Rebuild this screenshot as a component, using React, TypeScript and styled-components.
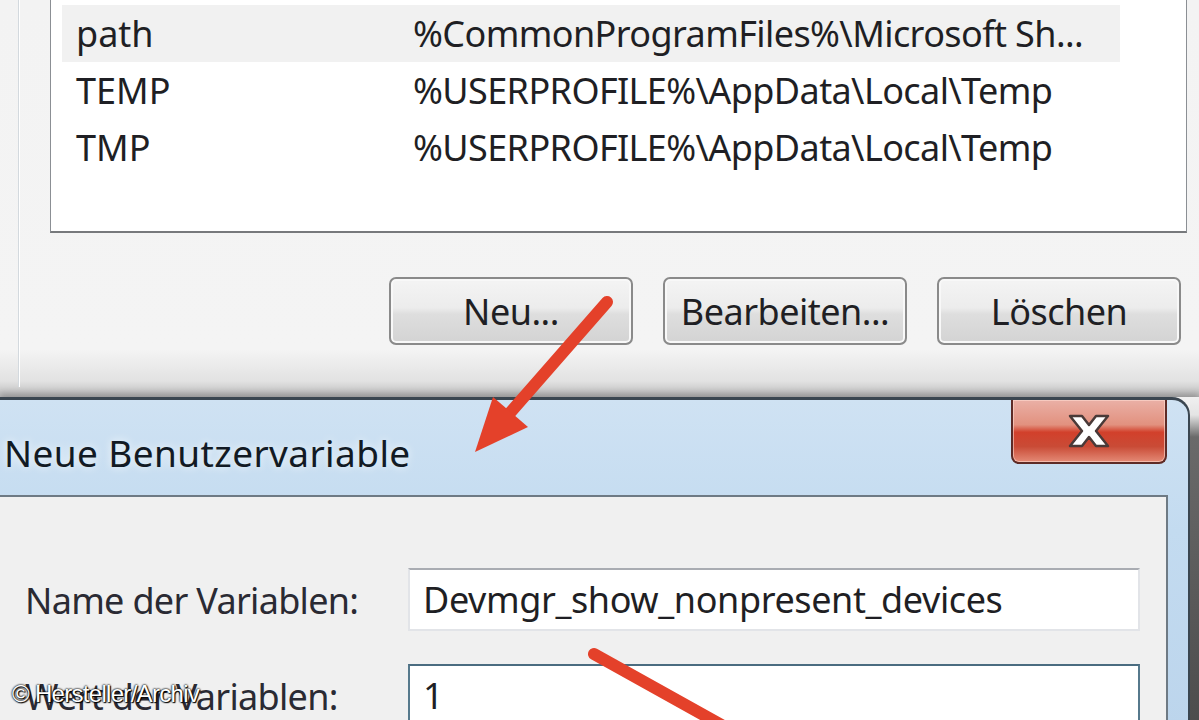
import styled, { createGlobalStyle } from 'styled-components';

const GlobalStyle = createGlobalStyle`
  html, body {
    margin: 0;
    padding: 0;
    overflow: hidden;
    background: #f0f0f0;
  }
`;

const uiFont = `'Noto Sans', 'Open Sans', 'DejaVu Sans', sans-serif`;

const Screen = styled.div`
  position: relative;
  width: 1199px;
  height: 720px;
  overflow: hidden;
  display: flex;
  flex-direction: column;
  font-family: ${uiFont};
  font-size: 36px;
  color: #1f1f24;
`;

const BackDialog = styled.div`
  flex: 0 0 397px;
  display: flex;
  padding-right: 12px;
  box-sizing: border-box;
  background: linear-gradient(to bottom, #f3f3f3 0%, #f4f4f4 88%, #e2e2e2 96%, #b9b9b9 100%);
`;

const GroupEdge = styled.div`
  flex: 0 0 18px;
  border-right: 1px solid #d3d9de;
  box-shadow: 1px 0 0 #ffffff;
  margin-bottom: 10px;
`;

const GroupBody = styled.div`
  flex: 1;
  padding-left: 31px;
  display: flex;
  flex-direction: column;
`;

const ListBox = styled.div`
  height: 233px;
  box-sizing: border-box;
  background: #ffffff;
  border: 1px solid #8b8f94;
  border-top: none;
  border-bottom: 2px solid #77797c;
  padding: 5px 66px 0 11px;
  display: flex;
  flex-direction: column;
`;

const Row = styled.div<{ $selected?: boolean }>`
  height: 57px;
  display: flex;
  align-items: center;
  padding-left: 14px;
  background: ${({ $selected }) => ($selected ? '#f1f1f1' : 'transparent')};
  white-space: nowrap;
`;

const NameCell = styled.span`
  flex: 0 0 337px;
`;

const ValueCell = styled.span`
  letter-spacing: -0.6px;
`;

const ButtonRow = styled.div`
  display: flex;
  justify-content: flex-end;
  gap: 30px;
  padding: 44px 6px 0 0;
`;

const Button = styled.div`
  width: 244px;
  height: 68px;
  box-sizing: border-box;
  border: 2px solid #8a8a8a;
  border-radius: 7px;
  background: linear-gradient(to bottom, #f4f4f4 0%, #ececec 45%, #dedede 55%, #d3d3d3 100%);
  box-shadow: inset 0 0 0 2px #f8f8f8;
  display: flex;
  align-items: center;
  justify-content: center;
  letter-spacing: -0.5px;
`;

const WindowRow = styled.div`
  flex: 1;
  display: flex;
  box-shadow: 0 -4px 6px rgba(0, 0, 0, 0.18);
`;

const Window = styled.div`
  flex: 0 0 1190px;
  display: flex;
  flex-direction: column;
  box-sizing: border-box;
  border-top: 3px solid #3a4650;
  border-right: 2px solid #3a4650;
  border-top-right-radius: 18px;
  background: linear-gradient(to bottom, #cfe2f3 0%, #c3dbf0 40%, #bcd5ec 100%);
  overflow: hidden;
`;

const OuterEdge = styled.div`
  flex: 1;
  background: linear-gradient(to bottom, #f0f0f0 0px, #e4e4e4 18px, #6a6a6a 40px, #4c4c4c 100%);
`;

const TitleBar = styled.div`
  flex: 0 0 95px;
  display: flex;
  align-items: flex-start;
  justify-content: space-between;
  padding-right: 21px;
  box-sizing: border-box;
`;

const Title = styled.div`
  padding: 27px 0 0 4px;
  font-size: 37px;
  color: #121a24;
  letter-spacing: 0.4px;
  text-shadow: 0 0 8px rgba(255, 255, 255, 0.9);
`;

const CloseButton = styled.div`
  width: 156px;
  height: 64px;
  box-sizing: border-box;
  border: 2px solid #5e2b26;
  border-top: none;
  border-radius: 0 0 8px 8px;
  background: linear-gradient(to bottom, #eab0a6 0%, #e2917f 40%, #d2402b 52%, #c94b36 75%, #e48a76 100%);
  box-shadow: inset 0 0 0 1px rgba(255, 220, 210, 0.6);
  display: flex;
  align-items: center;
  justify-content: center;
`;

const Body = styled.div`
  flex: 1;
  display: flex;
`;

const Content = styled.div`
  flex: 0 0 1168px;
  box-sizing: border-box;
  background: #f0f0f0;
  border-top: 2px solid #6e7a84;
  border-right: 2px solid #6e7a84;
  display: grid;
  grid-template-columns: 383px 732px;
  grid-auto-rows: 63px;
  row-gap: 33px;
  align-content: start;
  padding: 71px 0 0 25px;
`;

const Label = styled.div`
  display: flex;
  align-items: center;
  white-space: nowrap;
  color: #2a2a33;
  letter-spacing: -0.7px;
  padding-top: 2px;
`;

const Field = styled.div<{ $focused?: boolean }>`
  box-sizing: border-box;
  background: #ffffff;
  border: 2px solid ${({ $focused }) => ($focused ? '#56798c' : '#e2e4e8')};
  border-top-color: ${({ $focused }) => ($focused ? '#4a6c80' : '#a9acb2')};
  display: flex;
  align-items: center;
  padding-left: 13px;
  letter-spacing: -0.4px;
  white-space: nowrap;
`;

const Overlay = styled.svg`
  position: absolute;
  left: 0;
  top: 0;
  pointer-events: none;
`;

const Credit = styled.div`
  position: absolute;
  left: 12px;
  top: 680px;
  font-family: 'Liberation Sans', Arial, sans-serif;
  font-size: 24px;
  letter-spacing: -0.7px;
  color: #ffffff;
  text-shadow: 0 0 2px #000, 0 0 2px #000, 1px 1px 1px #000;
`;

const rows = [
  { name: 'path', value: '%CommonProgramFiles%\\Microsoft Sh...', selected: true },
  { name: 'TEMP', value: '%USERPROFILE%\\AppData\\Local\\Temp' },
  { name: 'TMP', value: '%USERPROFILE%\\AppData\\Local\\Temp' },
];

export default function App() {
  return (
    <Screen>
      <GlobalStyle />
      <BackDialog>
        <GroupEdge />
        <GroupBody>
          <ListBox>
            {rows.map((r) => (
              <Row key={r.name} $selected={r.selected}>
                <NameCell>{r.name}</NameCell>
                <ValueCell>{r.value}</ValueCell>
              </Row>
            ))}
          </ListBox>
          <ButtonRow>
            <Button>Neu...</Button>
            <Button>Bearbeiten...</Button>
            <Button>Löschen</Button>
          </ButtonRow>
        </GroupBody>
      </BackDialog>

      <WindowRow>
        <Window>
          <TitleBar>
            <Title>Neue Benutzervariable</Title>
            <CloseButton>
              <svg width="48" height="38" viewBox="0 0 48 38">
                <path
                  d="M5 4 L17 4 L24 13 L31 4 L43 4 L31 19 L43 34 L31 34 L24 25 L17 34 L5 34 L17 19 Z"
                  fill="#ffffff"
                  stroke="#4a3a38"
                  strokeWidth="2.5"
                  strokeLinejoin="round"
                />
              </svg>
            </CloseButton>
          </TitleBar>
          <Body>
            <Content>
              <Label>Name der Variablen:</Label>
              <Field>Devmgr_show_nonpresent_devices</Field>
              <Label>Wert der Variablen:</Label>
              <Field $focused>1</Field>
            </Content>
          </Body>
        </Window>
        <OuterEdge />
      </WindowRow>

      <Overlay width="1199" height="720" viewBox="0 0 1199 720">
        <line x1="607" y1="302" x2="509" y2="414" stroke="#e4412a" strokeWidth="12" strokeLinecap="round" />
        <polygon points="475,452 493,397 528,427" fill="#e4412a" />
        <line x1="594" y1="654" x2="770" y2="752" stroke="#e4412a" strokeWidth="12" strokeLinecap="round" />
      </Overlay>
      <Credit>© Hersteller/Archiv</Credit>
    </Screen>
  );
}
